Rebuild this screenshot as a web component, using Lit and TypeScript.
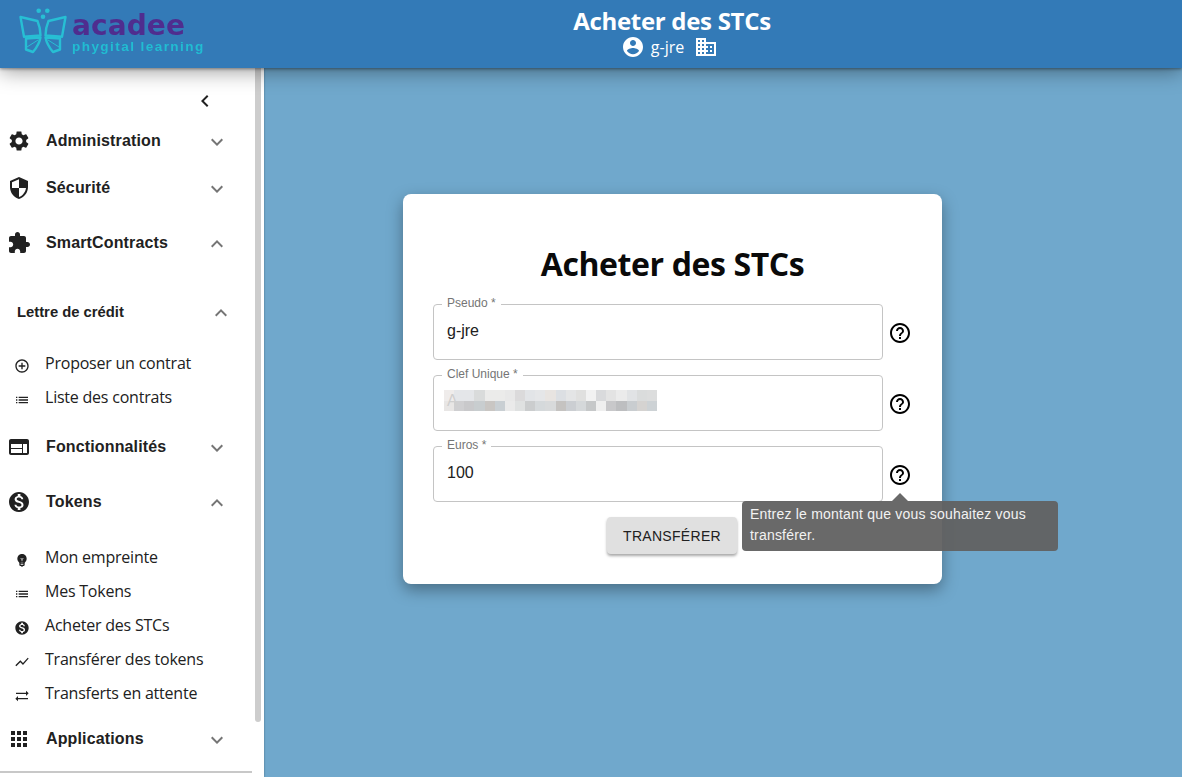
import { LitElement, html, css, svg } from "lit";
import { customElement } from "lit/decorators.js";

const ICONS: Record<string, string> = {
  settings:
    "M19.14 12.94c.04-.3.06-.61.06-.94 0-.32-.02-.64-.07-.94l2.03-1.58c.18-.14.23-.41.12-.61l-1.92-3.32c-.12-.22-.37-.29-.59-.22l-2.39.96c-.5-.38-1.03-.7-1.62-.94l-.36-2.54c-.04-.24-.24-.41-.48-.41h-3.84c-.24 0-.43.17-.47.41l-.36 2.54c-.59.24-1.13.57-1.62.94l-2.39-.96c-.22-.08-.47 0-.59.22L2.74 8.87c-.12.21-.08.47.12.61l2.03 1.58c-.05.3-.09.63-.09.94s.02.64.07.94l-2.03 1.58c-.18.14-.23.41-.12.61l1.92 3.32c.12.22.37.29.59.22l2.39-.96c.5.38 1.03.7 1.62.94l.36 2.54c.05.24.24.41.48.41h3.84c.24 0 .44-.17.47-.41l.36-2.54c.59-.24 1.13-.56 1.62-.94l2.39.96c.22.08.47 0 .59-.22l1.92-3.32c.12-.22.07-.47-.12-.61l-2.01-1.58zM12 15.6c-1.98 0-3.6-1.62-3.6-3.6s1.62-3.6 3.6-3.6 3.6 1.62 3.6 3.6-1.62 3.6-3.6 3.6z",
  security:
    "M12 1L3 5v6c0 5.55 3.84 10.74 9 12 5.16-1.26 9-6.45 9-12V5l-9-4zm0 10.99h7c-.53 4.12-3.28 7.79-7 8.94V12H5V6.3l7-3.11v8.8z",
  extension:
    "M20.5 11H19V7c0-1.1-.9-2-2-2h-4V3.5C13 2.12 11.88 1 10.5 1S8 2.12 8 3.5V5H4c-1.1 0-1.99.9-1.99 2v3.8H3.5c1.49 0 2.7 1.21 2.7 2.7s-1.21 2.7-2.7 2.7H2V20c0 1.1.9 2 2 2h3.8v-1.5c0-1.49 1.21-2.7 2.7-2.7 1.49 0 2.7 1.21 2.7 2.7V22H17c1.1 0 2-.9 2-2v-4h1.5c1.38 0 2.5-1.12 2.5-2.5S21.88 11 20.5 11z",
  more: "M16.59 8.59L12 13.17 7.41 8.59 6 10l6 6 6-6z",
  less: "M12 8l-6 6 1.41 1.41L12 10.83l4.59 4.58L18 14z",
  left: "M15.41 7.41L14 6l-6 6 6 6 1.41-1.41L10.83 12z",
  account:
    "M12 2C6.48 2 2 6.48 2 12s4.48 10 10 10 10-4.48 10-10S17.52 2 12 2zm0 3c1.66 0 3 1.34 3 3s-1.34 3-3 3-3-1.34-3-3 1.34-3 3-3zm0 14.2c-2.5 0-4.71-1.28-6-3.22.03-1.99 4-3.08 6-3.08 1.99 0 5.97 1.09 6 3.08-1.29 1.94-3.5 3.22-6 3.22z",
  domain:
    "M12 7V3H2v18h20V7H12zM6 19H4v-2h2v2zm0-4H4v-2h2v2zm0-4H4V9h2v2zm0-4H4V5h2v2zm4 12H8v-2h2v2zm0-4H8v-2h2v2zm0-4H8V9h2v2zm0-4H8V5h2v2zm10 12h-8v-2h2v-2h-2v-2h2v-2h-2V9h8v10zm-2-8h-2v2h2v-2zm0 4h-2v2h2v-2z",
  help: "M11 18h2v-2h-2v2zm1-16C6.48 2 2 6.48 2 12s4.48 10 10 10 10-4.48 10-10S17.52 2 12 2zm0 18c-4.41 0-8-3.59-8-8s3.59-8 8-8 8 3.59 8 8-3.59 8-8 8zm0-14c-2.21 0-4 1.79-4 4h2c0-1.1.9-2 2-2s2 .9 2 2c0 2-3 1.75-3 5h2c0-2.25 3-2.5 3-5 0-2.21-1.79-4-4-4z",
  add: "M13 7h-2v4H7v2h4v4h2v-4h4v-2h-4V7zm-1-5C6.48 2 2 6.48 2 12s4.48 10 10 10 10-4.48 10-10S17.52 2 12 2zm0 18c-4.41 0-8-3.59-8-8s3.59-8 8-8 8 3.59 8 8-3.59 8-8 8z",
  list: "M3 13h2v-2H3v2zm0 4h2v-2H3v2zm0-8h2V7H3v2zm4 4h14v-2H7v2zm0 4h14v-2H7v2zM7 7v2h14V7H7z",
  web: "M20 4H4c-1.1 0-1.99.9-1.99 2L2 18c0 1.1.9 2 2 2h16c1.1 0 2-.9 2-2V6c0-1.1-.9-2-2-2zm-5 14H4v-4h11v4zm0-5H4V9h11v4zm5 5h-4V9h4v9z",
  money:
    "M12 2C6.48 2 2 6.48 2 12s4.48 10 10 10 10-4.48 10-10S17.52 2 12 2zm1.41 16.09V20h-2.67v-1.93c-1.71-.36-3.16-1.46-3.27-3.4h1.96c.1 1.05.82 1.87 2.65 1.87 1.96 0 2.4-.98 2.4-1.59 0-.83-.44-1.61-2.67-2.14-2.48-.6-4.18-1.62-4.18-3.67 0-1.72 1.39-2.84 3.11-3.21V4h2.67v1.95c1.86.45 2.79 1.86 2.85 3.39H14.3c-.05-1.11-.64-1.87-2.22-1.87-1.5 0-2.4.68-2.4 1.64 0 .84.65 1.39 2.67 1.91s4.18 1.39 4.18 3.91c-.01 1.83-1.38 2.83-3.12 3.16z",
  bulb: "M12 3c-.46 0-.93.04-1.4.14-2.76.53-4.96 2.76-5.48 5.52-.48 2.61.48 5.01 2.22 6.56.43.38.66.91.66 1.47V19c0 1.1.9 2 2 2h.28c.35.6.98 1 1.72 1s1.38-.4 1.72-1H14c1.1 0 2-.9 2-2v-2.31c0-.55.23-1.09.64-1.46C18.09 13.95 19 12.08 19 10c0-3.87-3.13-7-7-7zm2 16h-4v-1h4v1zm0-2h-4v-1h4v1zm-1.5-5.59V14h-1v-2.59L9.67 9.59l.71-.71L12 10.5l1.62-1.62.71.71-1.83 1.82z",
  chart: "M3.5 18.49l6-6.01 4 4L22 6.92l-1.41-1.41-7.09 7.97-4-4L2 16.99z",
  swap: "M22 8l-4-4v3H3v2h15v3l4-4zM2 16l4 4v-3h15v-2H6v-3l-4 4z",
  apps: "M4 8h4V4H4v4zm6 12h4v-4h-4v4zm-6 0h4v-4H4v4zm0-6h4v-4H4v4zm6 0h4v-4h-4v4zm6-10v4h4V4h-4zm-6 4h4V4h-4v4zm6 6h4v-4h-4v4zm0 6h4v-4h-4v4z",
};

const icon = (name: string, size = 24) => html`<svg
  class="icon"
  width=${size}
  height=${size}
  viewBox="0 0 24 24"
  fill="currentColor"
>
  ${svg`<path d=${ICONS[name]}></path>`}
</svg>`;

// blurred key: mosaic of two rows of 10px cells
const BLUR_TOP = ["#efeceb", "#e4e6e9", "#e4e6e9", "#d9dbdb", "#ebebea", "#ebebea", "#e8e8e8", "#dbdadb", "#e2e4e7", "#e5e6e8", "#e8e4e1", "#dcdfe3", "#e4e5e6", "#e0e0df", "#f2f2f2", "#d9dadc", "#e3e3e3", "#ebebeb", "#e1e3e5", "#dadcdc", "#dcdddd"];
const BLUR_BOTTOM = ["#e8e6e5", "#cfcfd1", "#c9c9cb", "#c8cdcf", "#c9c6c3", "#c9cfd3", "#eaeaea", "#dfe1e1", "#cbcdce", "#d5d9db", "#d8dadb", "#c5c3c1", "#cbced2", "#d5d8da", "#c6c8c9", "#efefef", "#c8c8ca", "#bdbec0", "#c9cdd0", "#d5d3d1", "#cdd2d5"];

@customElement("app-root")
export class AppRoot extends LitElement {
  static styles = css`
    :host {
      display: block;
      width: 1182px;
      height: 777px;
      overflow: hidden;
      position: relative;
      background: #70a8cc;
      font-family: "Liberation Sans", Arial, sans-serif;
      color: #212121;
    }

    .icon {
      display: block;
      flex: none;
    }

    /* Header */

    .top {
      position: relative;
      z-index: 3;
      height: 68px;
      display: flex;
      background: #337ab7;
      box-shadow: 0 1px 3px rgba(0, 0, 0, 0.4), 0 3px 20px rgba(0, 0, 0, 0.4);
      color: #fff;
    }

    .logo {
      width: 162px;
      flex: none;
      display: flex;
      padding: 8px 0 0 18px;
      box-sizing: border-box;
    }

    .logo__mark {
      width: 50px;
      height: 46px;
      flex: none;
      filter: blur(0.3px);
    }

    .logo__text {
      margin-left: 4px;
      white-space: nowrap;
      font-family: "DejaVu Sans", sans-serif;
      font-weight: 700;
      filter: blur(0.3px);
    }

    .logo__name {
      height: 21px;
      margin-top: 7px;
      font-size: 28px;
      line-height: 21px;
      letter-spacing: 0.1px;
      color: #4f2d8f;
    }

    .logo__tag {
      margin-top: 5px;
      height: 12px;
      font-family: "Liberation Sans", sans-serif;
      font-size: 13.5px;
      line-height: 12px;
      letter-spacing: 1.45px;
      color: #21bdd2;
    }

    .heading {
      flex: 1;
      display: flex;
      flex-direction: column;
      align-items: center;
      padding-top: 6px;
    }

    .heading__title {
      font-family: "Open Sans", sans-serif;
      font-size: 24px;
      line-height: 29px;
      font-weight: 700;
      letter-spacing: -0.3px;
    }

    .heading__user {
      display: flex;
      align-items: center;
      height: 24px;
      margin-left: -5px;
      font-family: "Open Sans", sans-serif;
      font-size: 16px;
    }

    .heading__name {
      margin: 0 10px 0 6px;
    }

    /* Page */

    .page {
      display: flex;
      height: 709px;
    }

    /* Side menu */

    .side {
      position: relative;
      width: 264px;
      flex: none;
      background: #fff;
      box-sizing: border-box;
      padding-top: 16px;
      overflow: hidden;
      box-shadow: 0 0 2px rgba(0, 0, 0, 0.35);
    }

    .side::after {
      content: "";
      position: absolute;
      top: 0;
      left: 255px;
      width: 6px;
      height: 654px;
      background: #cdcdcd;
      border-radius: 0 0 3px 3px;
    }

    .collapse {
      position: relative;
      height: 34px;
      padding-left: 193px;
      display: flex;
      align-items: center;
      color: #212121;
    }

    .group {
      display: flex;
      align-items: center;
      height: 46px;
      margin-bottom: 1px;
      padding-left: 7px;
      font-size: 16px;
      font-weight: 700;
      letter-spacing: 0.14px;
      color: #212121;
    }

    .group--gap {
      margin-top: 9px;
    }

    .group--wide {
      margin-top: 10px;
    }

    .group__label {
      margin-left: 15px;
      width: 159px;
    }

    .group__arrow {
      margin-top: 2px;
      color: #757575;
    }

    .sub {
      display: flex;
      align-items: center;
      height: 46px;
      margin: 23px 0 11px;
      padding-left: 17px;
      font-size: 14.8px;
      font-weight: 700;
      color: #212121;
    }

    .sub__label {
      width: 192px;
    }

    .item {
      display: flex;
      align-items: center;
      height: 34px;
      padding-left: 14px;
      font-family: "Open Sans", sans-serif;
      font-size: 16px;
      letter-spacing: -0.22px;
      color: #212121;
    }

    .item .icon {
      margin-top: 6px;
    }

    .item__label {
      margin-left: 15px;
    }

    .items--tokens {
      margin: 15px 0 6px;
    }

    .rule {
      position: absolute;
      top: 703px;
      left: 0;
      width: 252px;
      height: 2px;
      background: #c8c8c8;
    }

    /* Card */

    .content {
      flex: 1;
      padding: 126px 0 0 139px;
    }

    .card {
      position: relative;
      width: 539px;
      height: 390px;
      box-sizing: border-box;
      padding: 49px 0 0 30px;
      background: #fff;
      border-radius: 8px;
      box-shadow: 0 6px 16px rgba(0, 0, 0, 0.35);
    }

    .card__title {
      margin: 0;
      width: 479px;
      text-align: center;
      font-family: "Open Sans", sans-serif;
      font-size: 32px;
      line-height: 42px;
      font-weight: 700;
      letter-spacing: -0.4px;
      color: #0a0a0a;
    }

    .fields {
      display: flex;
      flex-direction: column;
      gap: 15px;
      margin-top: 19px;
    }

    .row {
      display: flex;
      align-items: center;
      gap: 5px;
    }

    .field {
      position: relative;
      width: 450px;
      height: 56px;
      box-sizing: border-box;
      border: 1px solid #c4c4c4;
      border-radius: 4px;
      display: flex;
      align-items: center;
      padding: 0 13px;
      font-size: 16px;
      color: #212121;
    }

    .field__value {
      margin-top: -3px;
    }

    .field__label {
      position: absolute;
      top: -8px;
      left: 8px;
      padding: 0 5px;
      background: #fff;
      font-size: 12px;
      line-height: 13px;
      color: #757575;
    }

    .mosaic {
      position: absolute;
      left: 10px;
      top: 14px;
      display: grid;
      grid-template-columns: repeat(21, 10.15px);
      grid-auto-rows: 10.5px;
      font-size: 16px;
    }

    .mosaic__letter {
      position: absolute;
      left: 3px;
      top: 2px;
      color: #cfcfcf;
    }

    .help {
      margin-top: 2px;
      color: #000;
    }

    .actions {
      margin: 15px 0 0 174px;
    }

    .button {
      width: 130px;
      height: 37px;
      border: 0;
      border-radius: 4px;
      padding: 0;
      background: #e0e0e0;
      box-shadow: 0 2px 3px rgba(0, 0, 0, 0.35);
      font-family: "Liberation Sans", sans-serif;
      font-size: 14px;
      letter-spacing: 0.3px;
      color: #212121;
    }

    /* Tooltip */

    .tip {
      position: absolute;
      left: 339px;
      top: 307px;
      width: 316px;
      height: 50px;
      box-sizing: border-box;
      padding: 3px 8px;
      border-radius: 4px;
      background: rgba(97, 97, 97, 0.95);
      font-size: 14px;
      line-height: 21px;
      letter-spacing: 0.2px;
      color: #f2f2f2;
    }

    .tip::before {
      content: "";
      position: absolute;
      top: -8px;
      left: 150px;
      border: 8px solid transparent;
      border-top: 0;
      border-bottom-color: rgba(97, 97, 97, 0.95);
    }
  `;

  private renderGroup(label: string, name: string, open = false, gap = "") {
    return html`<div class="group ${gap}">
      ${icon(name)}
      <span class="group__label">${label}</span>
      <span class="group__arrow">${icon(open ? "less" : "more")}</span>
    </div>`;
  }

  private renderItem(label: string, name: string) {
    return html`<div class="item">
      ${icon(name, 16)}
      <span class="item__label">${label}</span>
    </div>`;
  }

  private renderField(label: string, value: unknown) {
    return html`<div class="row">
      <div class="field">
        <span class="field__label">${label}</span>
        ${value}
      </div>
      <span class="help">${icon("help")}</span>
    </div>`;
  }

  render() {
    return html`
      <header class="top">
        <div class="logo">
          <svg class="logo__mark" viewBox="0 0 50 46" fill="none" stroke="#27bfd4" stroke-width="2.4" stroke-linejoin="round" stroke-linecap="round">
            <path d="M2.5 9 L19.5 13 Q22.5 20 22.5 27.5 L6 28.7 Z"></path>
            <path d="M8 30.5 L22.5 29.5 Q21 37 15 44 L8 41.5 Z"></path>
            <path d="M9 39 L20 32" stroke-width="1"></path>
            <g transform="matrix(-1 0 0 1 50 0)">
              <path d="M2.5 9 L19.5 13 Q22.5 20 22.5 27.5 L6 28.7 Z"></path>
              <path d="M8 30.5 L22.5 29.5 Q21 37 15 44 L8 41.5 Z"></path>
              <path d="M9 39 L20 32" stroke-width="1"></path>
            </g>
            <circle cx="20.7" cy="2.7" r="2.3" fill="#27bfd4" stroke="none"></circle>
            <circle cx="29.3" cy="2.7" r="2.3" fill="#27bfd4" stroke="none"></circle>
            <circle cx="25" cy="8.7" r="2.3" fill="#27bfd4" stroke="none"></circle>
          </svg>
          <div class="logo__text">
            <div class="logo__name">acadee</div>
            <div class="logo__tag">phygital learning</div>
          </div>
        </div>
        <div class="heading">
          <div class="heading__title">Acheter des STCs</div>
          <div class="heading__user">
            ${icon("account")}
            <span class="heading__name">g-jre</span>
            ${icon("domain")}
          </div>
        </div>
      </header>

      <div class="page">
        <nav class="side">
          <div class="collapse">${icon("left")}</div>
          ${this.renderGroup("Administration", "settings")}
          ${this.renderGroup("Sécurité", "security")}
          ${this.renderGroup("SmartContracts", "extension", true, "group--gap")}
          <div class="sub">
            <span class="sub__label">Lettre de crédit</span>
            <span class="group__arrow">${icon("less")}</span>
          </div>
          ${this.renderItem("Proposer un contrat", "add")}
          ${this.renderItem("Liste des contrats", "list")}
          ${this.renderGroup("Fonctionnalités", "web", false, "group--wide")}
          ${this.renderGroup("Tokens", "money", true, "group--gap")}
          <div class="items--tokens">
            ${this.renderItem("Mon empreinte", "bulb")}
            ${this.renderItem("Mes Tokens", "list")}
            ${this.renderItem("Acheter des STCs", "money")}
            ${this.renderItem("Transférer des tokens", "chart")}
            ${this.renderItem("Transferts en attente", "swap")}
          </div>
          ${this.renderGroup("Applications", "apps")}
          <div class="rule"></div>
        </nav>

        <main class="content">
          <section class="card">
            <h1 class="card__title">Acheter des STCs</h1>
            <div class="fields">
              ${this.renderField("Pseudo *", html`<span class="field__value">g-jre</span>`)}
              ${this.renderField(
                "Clef Unique *",
                html`<div class="mosaic">
                  ${[...BLUR_TOP, ...BLUR_BOTTOM].map(
                    (c) => html`<span style="background:${c}"></span>`
                  )}
                  <span class="mosaic__letter">A</span>
                </div>`
              )}
              ${this.renderField("Euros *", html`<span class="field__value">100</span>`)}
            </div>
            <div class="actions">
              <button class="button">TRANSFÉRER</button>
            </div>
            <div class="tip">Entrez le montant que vous souhaitez vous transférer.</div>
          </section>
        </main>
      </div>
    `;
  }
}
